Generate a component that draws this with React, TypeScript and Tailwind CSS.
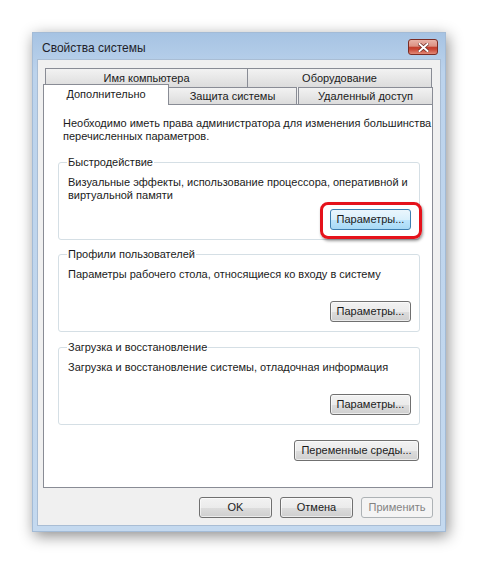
import React from 'react'

const btn =
  'h-[21px] rounded-[3px] border border-[#707070] bg-[linear-gradient(#f2f2f2_0%,#ebebeb_50%,#dddddd_51%,#cfcfcf_100%)] text-[#1b1b1b] shadow-[inset_0_0_0_1px_rgba(255,255,255,0.6)] flex items-center justify-center'

function Group({
  title,
  text,
  mt,
  highlight,
}: {
  title: string
  text: React.ReactNode
  mt: string
  highlight?: boolean
}) {
  return (
    <div className={`relative ${mt} h-[78px] rounded-[3px] border border-[#d5dfe5] pt-[13px] pb-[9px] pl-[9px] pr-[8px] flex flex-col justify-between`}>
      <span className="absolute -top-[7px] left-[8px] bg-white px-[1px] leading-[13px] text-[#1b1b1b]">{title}</span>
      <div className="leading-[13px] whitespace-nowrap">{text}</div>
      <div className="flex justify-end">
        {highlight ? (
          <span className="relative">
            <span className="absolute -left-[10px] -right-[11px] -top-[7px] -bottom-[9px] rounded-[8px] border-[3px] border-[#e5121b] shadow-[1px_2px_3px_rgba(0,0,0,0.4)]" />
            <button className="h-[21px] w-[81px] rounded-[3px] border border-[#3c7fb1] bg-[linear-gradient(#eaf6fd_0%,#d9f0fc_50%,#bee6fd_51%,#a7d9f5_100%)] text-[#1b1b1b] flex items-center justify-center">
              Параметры...
            </button>
          </span>
        ) : (
          <button className={`${btn} w-[81px]`}>Параметры...</button>
        )}
      </div>
    </div>
  )
}

export default function App() {
  return (
    <div className="w-[478px] h-[564px] bg-white pl-[32px] pt-[32px] font-['Liberation_Sans',Arial,sans-serif] text-[11px] text-[#1b1b1b]">
      <div className="w-[414px] h-[500px] flex flex-col bg-[linear-gradient(#a6c3e3_0%,#bcd3ec_8%,#c4d9ef_100%)] border border-[#a3bbd6] shadow-[2px_4px_14px_rgba(0,0,0,0.45)]">
        {/* Заголовок */}
        <div className="h-[26px] flex items-start justify-between pl-[9px] pr-[7px]">
          <span className="mt-[8px] text-[12px] leading-[14px] text-[#1e1e2a]">Свойства системы</span>
          <button className="mt-[6px] w-[30px] h-[16px] rounded-[3px] border border-[#7b2c24] bg-[linear-gradient(#e9b3a8_0%,#dc9183_45%,#c23e2d_50%,#c84433_65%,#e38a78_100%)] flex items-center justify-center">
            <svg width="11" height="9" viewBox="0 0 11 9">
              <path d="M1.5 1 L9.5 8 M9.5 1 L1.5 8" stroke="#6d2a22" strokeWidth="3.4" strokeLinecap="square" />
              <path d="M1.5 1 L9.5 8 M9.5 1 L1.5 8" stroke="#ffffff" strokeWidth="2" strokeLinecap="square" />
            </svg>
          </button>
        </div>

        {/* Клиентская область */}
        <div className="mx-[4px] mb-[5px] flex-1 bg-[#f0f0f0] border border-[#a9bdd4] pl-[5px] pr-[7px] pt-[8px] flex flex-col">
          {/* Вкладки */}
          <div className="flex flex-col">
            <div className="ml-[2px] h-[19px] flex">
              <div className="w-[203px] h-[19px] border border-b-0 border-[#898c95] bg-[linear-gradient(#f2f2f2,#dcdcdc)] flex items-center justify-center">
                Имя компьютера
              </div>
              <div className="w-[184px] h-[19px] border border-b-0 border-l-0 border-[#898c95] bg-[linear-gradient(#f2f2f2,#dcdcdc)] flex items-center justify-center">
                Оборудование
              </div>
            </div>
            <div className="h-[17px] flex items-end">
              <div className="relative z-10 -mb-[1px] w-[126px] h-[21px] border border-b-0 border-[#898c95] bg-white flex items-center justify-center pb-[1px]">
                Дополнительно
              </div>
              <div className="w-[128px] h-[17px] border border-b-0 border-l-0 border-[#898c95] bg-[linear-gradient(#f2f2f2,#dcdcdc)] flex items-center justify-center">
                Защита системы
              </div>
              <div className="ml-[1px] w-[135px] h-[17px] border border-b-0 border-[#898c95] bg-[linear-gradient(#f2f2f2,#dcdcdc)] flex items-center justify-center">
                Удаленный доступ
              </div>
            </div>
          </div>

          {/* Панель */}
          <div className="w-[390px] h-[384px] bg-white border border-[#898c95] pl-[14px] pr-[12px] pt-[12px] flex flex-col">
            <p className="ml-[5px] leading-[13px] whitespace-nowrap">
              Необходимо иметь права администратора для изменения большинства
              <br />
              перечисленных параметров.
            </p>

            <Group
              mt="mt-[19px]"
              title="Быстродействие"
              highlight
              text={
                <>
                  Визуальные эффекты, использование процессора, оперативной и
                  <br />
                  виртуальной памяти
                </>
              }
            />
            <Group mt="mt-[14px]" title="Профили пользователей" text="Параметры рабочего стола, относящиеся ко входу в систему" />
            <Group mt="mt-[15px]" title="Загрузка и восстановление" text="Загрузка и восстановление системы, отладочная информация" />

            <div className="mt-[15px] flex justify-end">
              <button className={`${btn} w-[125px] mr-[1px]`}>Переменные среды...</button>
            </div>
          </div>

          {/* Кнопки */}
          <div className="mt-[9px] w-[390px] flex justify-end gap-[8px]">
            <button className={`${btn} w-[73px]`}>OK</button>
            <button className={`${btn} w-[73px]`}>Отмена</button>
            <button className="h-[21px] w-[72px] rounded-[3px] border border-[#adb2b5] bg-[#f4f4f4] text-[#838383] flex items-center justify-center">
              Применить
            </button>
          </div>
        </div>
      </div>
    </div>
  )
}
